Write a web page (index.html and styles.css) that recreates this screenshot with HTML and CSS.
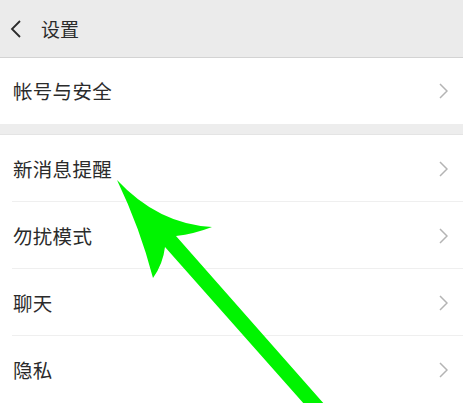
FILE: index.html
```html
<!DOCTYPE html>
<html lang="zh-CN">

<head>
  <meta charset="UTF-8">
  <meta name="viewport" content="width=device-width, initial-scale=1.0">
  <title>设置</title>
  <link rel="stylesheet" href="styles.css">
</head>

<body>
  <div class="page">
    <div class="top-bar">
      <svg class="back" width="12" height="18" viewBox="0 0 12 18">
        <polyline points="10,1 2,9 10,17" fill="none" stroke="#2a2a2a" stroke-width="1.8" />
      </svg>
      <span class="title">设置</span>
    </div>

    <div class="group">
      <div class="cell cell-first">
        <span class="label">帐号与安全</span>
        <svg class="more" width="9" height="16" viewBox="0 0 9 16">
          <polyline points="1,1 8,8 1,15" fill="none" stroke="#b4b4b4" stroke-width="1.5" />
        </svg>
      </div>
    </div>

    <div class="group group-gap">
      <div class="cell">
        <span class="label">新消息提醒</span>
        <svg class="more" width="9" height="16" viewBox="0 0 9 16">
          <polyline points="1,1 8,8 1,15" fill="none" stroke="#b4b4b4" stroke-width="1.5" />
        </svg>
      </div>
      <div class="cell">
        <span class="label">勿扰模式</span>
        <svg class="more" width="9" height="16" viewBox="0 0 9 16">
          <polyline points="1,1 8,8 1,15" fill="none" stroke="#b4b4b4" stroke-width="1.5" />
        </svg>
      </div>
      <div class="cell">
        <span class="label">聊天</span>
        <svg class="more" width="9" height="16" viewBox="0 0 9 16">
          <polyline points="1,1 8,8 1,15" fill="none" stroke="#b4b4b4" stroke-width="1.5" />
        </svg>
      </div>
      <div class="cell">
        <span class="label">隐私</span>
        <svg class="more" width="9" height="16" viewBox="0 0 9 16">
          <polyline points="1,1 8,8 1,15" fill="none" stroke="#b4b4b4" stroke-width="1.5" />
        </svg>
      </div>
    </div>

    <!-- 标注箭头 -->
    <svg class="pointer" width="463" height="403" viewBox="0 0 463 403">
      <path d="M117,180 Q158,224 212,227 Q194,234 176,236 L325,405 L305,405 L165,247 Q163,264 153,278 Q140,228 117,180 Z" fill="#00f400" />
    </svg>
  </div>
</body>

</html>
```

FILE: styles.css
```css
* {
  box-sizing: border-box;
  padding: 0;
  margin: 0;
}

html,
body {
  width: 100%;
  height: 100%;
  overflow: hidden;
  background-color: #ededed;
}

.page {
  position: relative;
  width: 463px;
  height: 403px;
  font-family: "Noto Sans CJK SC", "Noto Sans", sans-serif;
  color: #2b2b2b;
}

.top-bar {
  height: 58px;
  display: flex;
  align-items: center;
  padding-left: 10px;
  background-color: #ebebeb;
  border-bottom: 1px solid #d3d3d3;
}

.top-bar .back {
  margin-right: 19px;
}

.top-bar .title {
  font-size: 19px;
  line-height: 1;
}

.group {
  background-color: #fff;
}

.group-gap {
  margin-top: 10px;
  border-top: 1px solid #e4e4e4;
}

.cell {
  height: 67px;
  display: flex;
  align-items: center;
  justify-content: space-between;
  padding: 0 15px 0 13px;
  position: relative;
}

.cell-first {
  height: 66px;
}

.group-gap .cell + .cell::before {
  content: "";
  position: absolute;
  left: 12px;
  right: 0;
  top: -1px;
  height: 1px;
  background-color: #efefef;
}

.cell .label {
  font-size: 19.5px;
  line-height: 1;
  letter-spacing: 0.3px;
}

.pointer {
  position: absolute;
  left: 0;
  top: 0;
}
```
